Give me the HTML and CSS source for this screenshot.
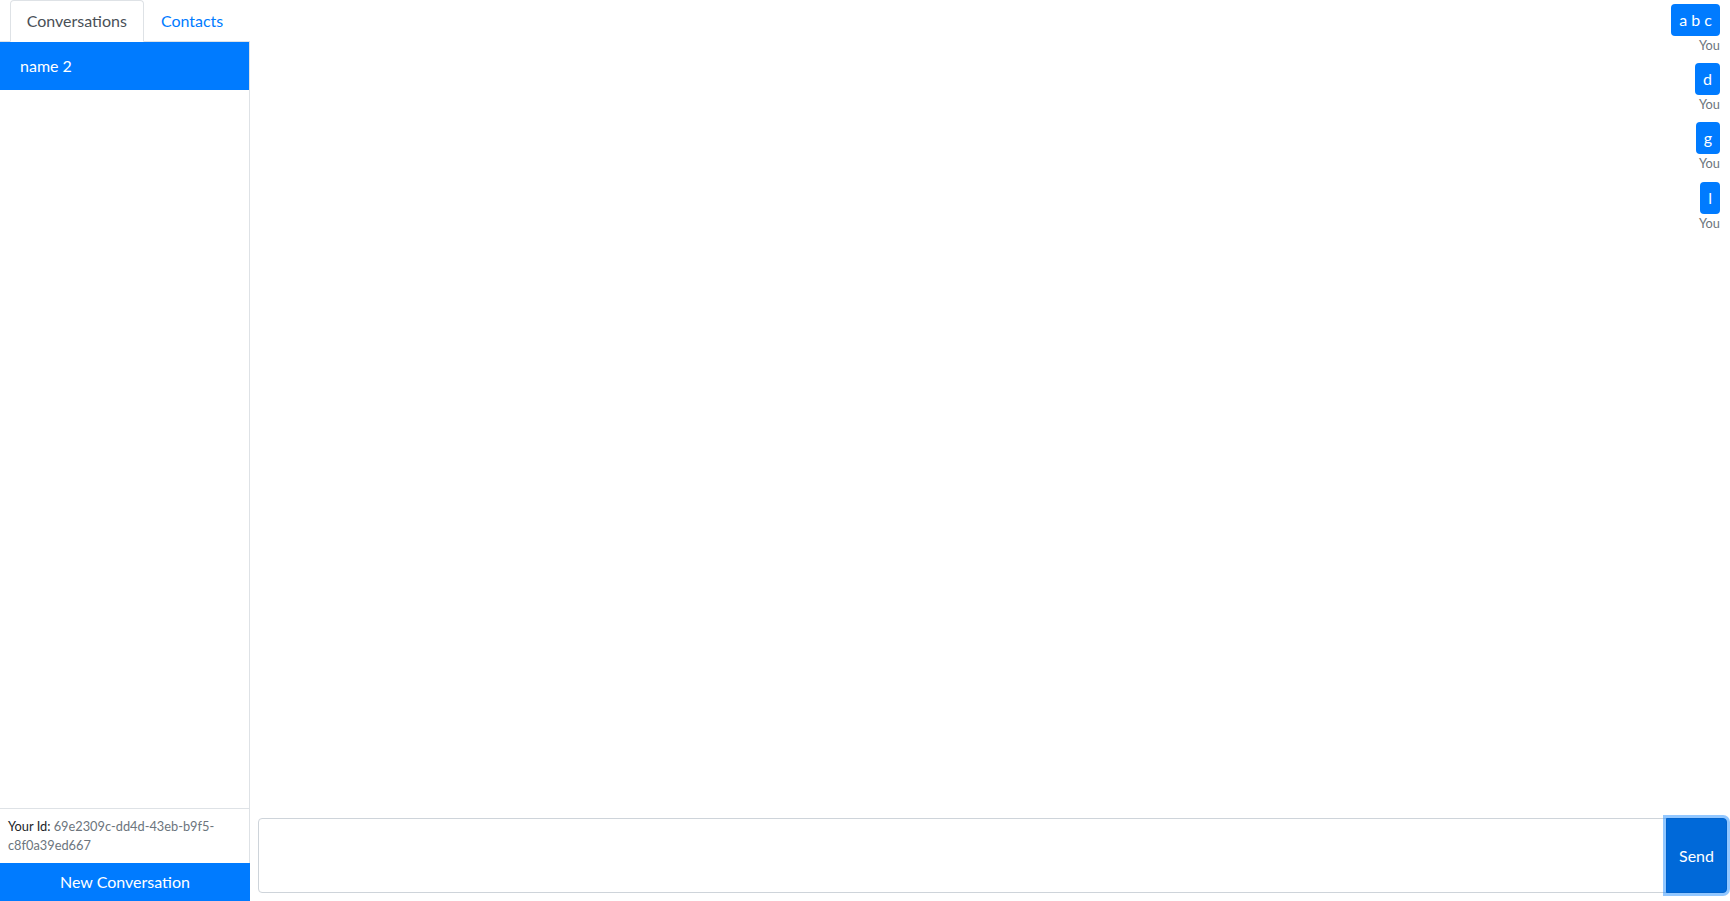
FILE: index.html
```html
<!DOCTYPE html>
<html>
<head>
<meta charset="UTF-8">
<title>Chat</title>
<link rel="stylesheet" href="styles.css">
</head>
<body>
<div class="app">
  <div class="sidebar">
    <ul class="tabs">
      <li><a class="tab active" href="#">Conversations</a></li>
      <li><a class="tab" href="#">Contacts</a></li>
    </ul>
    <div class="tab-content">
      <div class="list-item active">name 2</div>
    </div>
    <div class="your-id">Your Id: <span class="muted">69e2309c-dd4d-43eb-b9f5-c8f0a39ed667</span></div>
    <button class="btn-new">New Conversation</button>
  </div>

  <div class="conversation">
    <div class="messages">
      <div class="message">
        <div class="bubble">a b c</div>
        <div class="sender">You</div>
      </div>
      <div class="message">
        <div class="bubble">d</div>
        <div class="sender">You</div>
      </div>
      <div class="message">
        <div class="bubble">g</div>
        <div class="sender">You</div>
      </div>
      <div class="message">
        <div class="bubble">l</div>
        <div class="sender">You</div>
      </div>
    </div>
    <form class="send-form">
      <textarea class="text-input"></textarea>
      <button type="button" class="btn-send">Send</button>
    </form>
  </div>
</div>
</body>
</html>
```

FILE: styles.css
```css
* {
	box-sizing: border-box;
}
html, body {
	height: 100%;
}
body {
	margin: 0;
	font-family: Lato, "Noto Sans", sans-serif;
	font-size: 16px;
	line-height: 1.5;
	color: #212529;
	background: #fff;
}
.app {
	display: flex;
	height: 100vh;
}

/* sidebar */
.sidebar {
	width: 250px;
	display: flex;
	flex-direction: column;
}
.tabs {
	display: flex;
	justify-content: center;
	list-style: none;
	margin: 0;
	padding: 0;
	border-bottom: 1px solid #dee2e6;
}
.tabs li {
	margin-bottom: -1px;
}
.tab {
	display: block;
	padding: 8px 16px;
	border: 1px solid transparent;
	border-top-left-radius: 4px;
	border-top-right-radius: 4px;
	color: #007bff;
	text-decoration: none;
}
.tab.active {
	color: #495057;
	border-color: #dee2e6 #dee2e6 #fff;
	background: #fff;
}
.tab-content {
	flex-grow: 1;
	overflow: auto;
	border-right: 1px solid #dee2e6;
}
.list-item {
	padding: 12px 20px;
}
.list-item.active {
	background: #007bff;
	color: #fff;
}
.your-id {
	padding: 8px;
	border-top: 1px solid #dee2e6;
	border-right: 1px solid #dee2e6;
	font-size: 12.8px;
}
.muted {
	color: #6c757d;
}
.btn-new {
	display: block;
	width: 100%;
	padding: 6px 12px;
	border: 1px solid #007bff;
	border-radius: 0;
	background: #007bff;
	color: #fff;
	font-family: inherit;
	font-size: 16px;
	line-height: 1.5;
}

/* conversation */
.conversation {
	flex-grow: 1;
	display: flex;
	flex-direction: column;
}
.messages {
	flex-grow: 1;
	overflow: auto;
	display: flex;
	flex-direction: column;
	align-items: flex-end;
	padding: 0 10px 0 16px;
}
.message {
	display: flex;
	flex-direction: column;
	align-items: flex-end;
	margin: 4px 0;
}
.bubble {
	padding: 4px 8px;
	border-radius: 4px;
	background: #007bff;
	color: #fff;
}
.sender {
	font-size: 12.8px;
	color: #6c757d;
	text-align: right;
}
.send-form {
	display: flex;
	margin: 8px 3px 8px 8px;
}
.text-input {
	flex-grow: 1;
	height: 75px;
	resize: none;
	padding: 6px 12px;
	border: 1px solid #ced4da;
	border-radius: 4px 0 0 4px;
	font-family: inherit;
	font-size: 16px;
}
.btn-send {
	margin-left: -1px;
	padding: 6px 12px;
	border: 1px solid #0062cc;
	border-radius: 0 4px 4px 0;
	background: #0069d9;
	color: #fff;
	font-family: inherit;
	font-size: 16px;
	line-height: 1.5;
	box-shadow: 0 0 0 3px rgba(38, 143, 255, .5);
}
```
